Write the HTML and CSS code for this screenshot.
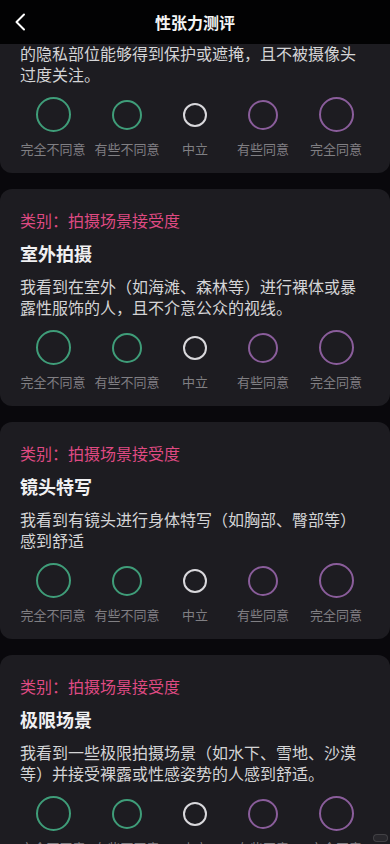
FILE: index.html
```html
<!DOCTYPE html>
<html lang="zh-CN">
<head>
<meta charset="utf-8">
<meta name="viewport" content="width=device-width, initial-scale=1">
<title>性张力测评</title>
<link rel="stylesheet" href="styles.css">
</head>
<body>
<header class="topbar">
  <button class="back" aria-label="返回">
    <svg width="14" height="20" viewBox="0 0 14 20"><path d="M11 2.5 L3.5 10 L11 17.5" fill="none" stroke="#fff" stroke-width="2" stroke-linecap="round" stroke-linejoin="round"/></svg>
  </button>
  <h1 class="title">性张力测评</h1>
</header>

<main class="list">
  <section class="card card-first">
    <p class="desc">的隐私部位能够得到保护或遮掩，且不被摄像头过度关注。</p>
    <div class="options">
      <div class="opt"><span class="ring ring-lg green"></span><span class="lbl">完全不同意</span></div>
      <div class="opt"><span class="ring ring-md green"></span><span class="lbl">有些不同意</span></div>
      <div class="opt"><span class="ring ring-sm neutral"></span><span class="lbl">中立</span></div>
      <div class="opt"><span class="ring ring-md purple"></span><span class="lbl">有些同意</span></div>
      <div class="opt"><span class="ring ring-lg purple"></span><span class="lbl">完全同意</span></div>
    </div>
  </section>

  <section class="card">
    <p class="cat">类别：拍摄场景接受度</p>
    <h2 class="qtitle">室外拍摄</h2>
    <p class="desc">我看到在室外（如海滩、森林等）进行裸体或暴露性服饰的人，且不介意公众的视线。</p>
    <div class="options">
      <div class="opt"><span class="ring ring-lg green"></span><span class="lbl">完全不同意</span></div>
      <div class="opt"><span class="ring ring-md green"></span><span class="lbl">有些不同意</span></div>
      <div class="opt"><span class="ring ring-sm neutral"></span><span class="lbl">中立</span></div>
      <div class="opt"><span class="ring ring-md purple"></span><span class="lbl">有些同意</span></div>
      <div class="opt"><span class="ring ring-lg purple"></span><span class="lbl">完全同意</span></div>
    </div>
  </section>

  <section class="card">
    <p class="cat">类别：拍摄场景接受度</p>
    <h2 class="qtitle">镜头特写</h2>
    <p class="desc">我看到有镜头进行身体特写（如胸部、臀部等）感到舒适</p>
    <div class="options">
      <div class="opt"><span class="ring ring-lg green"></span><span class="lbl">完全不同意</span></div>
      <div class="opt"><span class="ring ring-md green"></span><span class="lbl">有些不同意</span></div>
      <div class="opt"><span class="ring ring-sm neutral"></span><span class="lbl">中立</span></div>
      <div class="opt"><span class="ring ring-md purple"></span><span class="lbl">有些同意</span></div>
      <div class="opt"><span class="ring ring-lg purple"></span><span class="lbl">完全同意</span></div>
    </div>
  </section>

  <section class="card">
    <p class="cat">类别：拍摄场景接受度</p>
    <h2 class="qtitle">极限场景</h2>
    <p class="desc">我看到一些极限拍摄场景（如水下、雪地、沙漠等）并接受裸露或性感姿势的人感到舒适。</p>
    <div class="options">
      <div class="opt"><span class="ring ring-lg green"></span><span class="lbl">完全不同意</span></div>
      <div class="opt"><span class="ring ring-md green"></span><span class="lbl">有些不同意</span></div>
      <div class="opt"><span class="ring ring-sm neutral"></span><span class="lbl">中立</span></div>
      <div class="opt"><span class="ring ring-md purple"></span><span class="lbl">有些同意</span></div>
      <div class="opt"><span class="ring ring-lg purple"></span><span class="lbl">完全同意</span></div>
    </div>
  </section>
</main>
<div class="mark"></div>
</body>
</html>
```

FILE: styles.css
```css
* { box-sizing: border-box; }
html, body { margin: 0; padding: 0; }
body {
  background: #09080c;
  font-family: "Noto Sans CJK SC", "Noto Sans", sans-serif;
  color: #d6d6d8;
  height: 844px;
  overflow: hidden;
}
.topbar {
  position: fixed;
  top: 0; left: 0; right: 0;
  height: 44px;
  background: #020203;
  display: flex;
  align-items: center;
  justify-content: center;
  z-index: 10;
}
.back {
  position: absolute;
  left: 10px;
  top: 12px;
  width: 20px;
  height: 20px;
  padding: 0;
  border: 0;
  background: transparent;
  display: flex;
  align-items: center;
  justify-content: center;
}
.title {
  margin: 0;
  font-size: 16px;
  font-weight: 700;
  color: #f4f4f4;
  line-height: 22px;
}
.list {
  display: flex;
  flex-direction: column;
  gap: 16px;
}
.card {
  background: #1d1c21;
  border-radius: 12px;
  padding: 20px 20px 15px;
  display: flex;
  flex-direction: column;
}
.card-first { padding-top: 43px; }
.cat {
  margin: 0;
  font-size: 16px;
  line-height: 22px;
  color: #df4a82;
}
.qtitle {
  margin: 9px 0 0;
  font-size: 18px;
  line-height: 26px;
  font-weight: 700;
  color: #f0f0f2;
}
.desc {
  margin: 10px 0 0;
  font-size: 16px;
  line-height: 21px;
  color: #d4d4d6;
}
.card-first .desc { margin-top: 0; }
.options {
  margin-top: 12px;
  display: grid;
  grid-template-columns: 66px 82px 54px 82px 64px;
}
.opt {
  display: flex;
  flex-direction: column;
  align-items: center;
  gap: 8px;
}
.ring {
  display: block;
  border-radius: 50%;
  border: 2px solid;
}
.ring-lg { width: 35px; height: 35px; }
.ring-md { width: 30px; height: 30px; margin: 2.5px 0; }
.ring-sm { width: 24px; height: 24px; margin: 5.5px 0; }
.green { border-color: #3f9d79; }
.purple { border-color: #8a5d9b; }
.neutral { border-color: #d9d8dc; }
.lbl {
  font-size: 13px;
  line-height: 18px;
  color: #807f83;
  white-space: nowrap;
}
.mark {
  position: fixed;
  right: 2px;
  bottom: 2px;
  width: 15px;
  height: 8px;
  border: 1px solid rgba(255,255,255,0.12);
  background: rgba(255,255,255,0.05);
  border-radius: 4px;
}
```
